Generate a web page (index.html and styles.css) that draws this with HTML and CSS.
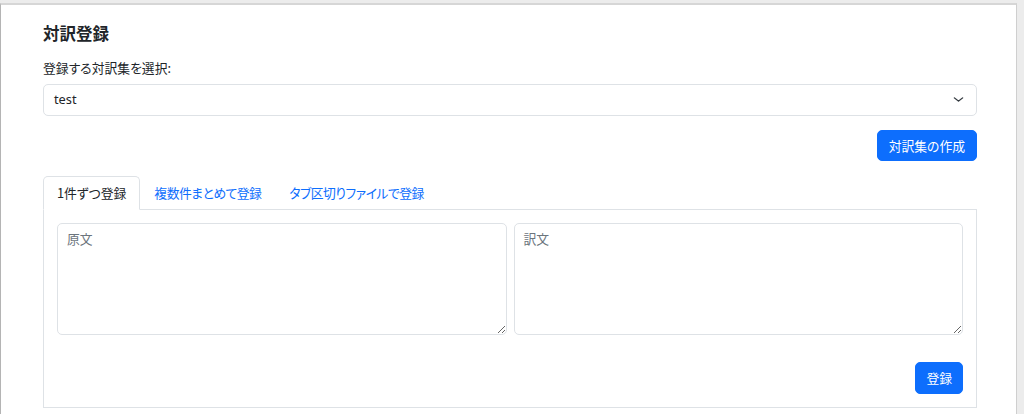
FILE: index.html
```html
<!DOCTYPE html>
<html lang="ja">
<head>
<meta charset="utf-8">
<title>対訳登録</title>
<link rel="stylesheet" href="styles.css">
</head>
<body>
<div class="window">
  <main class="content">
    <h5 class="title">対訳登録</h5>
    <label class="label" for="set">登録する対訳集を選択:</label>
    <div class="select">
      <span class="select-value">test</span>
      <svg class="chevron" viewBox="0 0 16 16" width="11" height="9" preserveAspectRatio="none"><path d="m2 5 6 6 6-6" fill="none" stroke="#343a40" stroke-width="2" stroke-linecap="round" stroke-linejoin="round"/></svg>
    </div>
    <div class="actions">
      <button class="btn">対訳集の作成</button>
    </div>
    <ul class="tabs">
      <li class="tab active">1件ずつ登録</li>
      <li class="tab">複数件まとめて登録</li>
      <li class="tab">タブ区切りファイルで登録</li>
    </ul>
    <section class="panel">
      <div class="fields">
        <textarea class="area" placeholder="原文"></textarea>
        <textarea class="area" placeholder="訳文"></textarea>
      </div>
      <div class="panel-actions">
        <button class="btn">登録</button>
      </div>
    </section>
  </main>
</div>
</body>
</html>
```

FILE: styles.css
```css
* { box-sizing: border-box; }
html, body { margin: 0; height: 100%; }
body {
  background: #ececec;
  font-family: "Noto Sans CJK JP", "Noto Sans", sans-serif;
  font-feature-settings: "palt";
  font-size: 12.8px;
  line-height: 1.5;
  color: #212529;
  overflow: hidden;
}
.window {
  margin-top: 3px;
  width: 1017px;
  height: 100%;
  background: #fff;
  border-top: 2px solid #d6d6d6;
  border-left: 1px solid #b4b4b4;
  border-right: 1px solid #cfcfcf;
}
.content {
  padding: 19px 39px 0 42px;
}
.title {
  margin: 0 0 14px;
  font-size: 16.5px;
  font-weight: 700;
  line-height: 1.2;
  color: #212529;
}
.label {
  display: block;
  margin-bottom: 7px;
}
.select {
  display: flex;
  align-items: center;
  justify-content: space-between;
  height: 32px;
  padding: 0 12px 0 10px;
  border: 1px solid #dee2e6;
  border-radius: 5px;
  background: #fff;
}
.select-value { font-family: "Noto Sans", sans-serif; font-size: 12.8px; }
.chevron { display: block; }
.actions {
  display: flex;
  justify-content: flex-end;
  margin-top: 14px;
}
.btn {
  font-family: inherit;
  font-feature-settings: "palt";
  font-size: 12.8px;
  line-height: 19px;
  color: #fff;
  background: #0d6efd;
  border: 1px solid #0d6efd;
  border-radius: 5px;
  padding: 5px 11px;
  height: 31px;
}
.tabs {
  display: flex;
  list-style: none;
  margin: 15px 0 0;
  padding: 0;
  border-bottom: 1px solid #dee2e6;
}
.tab {
  padding: 6px 13px 7px;
  margin-bottom: -1px;
  border: 1px solid transparent;
  border-top-left-radius: 5px;
  border-top-right-radius: 5px;
  color: #0d6efd;
  line-height: 19px;
  letter-spacing: -0.5px;
}
.tab.active {
  color: #212529;
  background: #fff;
  border-color: #dee2e6 #dee2e6 #fff;
  letter-spacing: 0;
}
.panel {
  border: 1px solid #dee2e6;
  border-top: none;
  padding: 13px 13px 13px;
}
.fields {
  display: grid;
  grid-template-columns: 1fr 1fr;
  gap: 7px;
}
.area {
  display: block;
  width: 100%;
  height: 112px;
  resize: vertical;
  border: 1px solid #dee2e6;
  border-radius: 5px;
  padding: 5px 9px;
  font-family: inherit;
  font-feature-settings: "palt";
  font-size: 12.8px;
  line-height: 1.5;
  color: #212529;
}
.area::placeholder { color: #6c757d; }
.panel-actions {
  display: flex;
  justify-content: flex-end;
  margin-top: 27px;
}
.panel-actions .btn { height: 32px; padding: 5px 10px; }
```
